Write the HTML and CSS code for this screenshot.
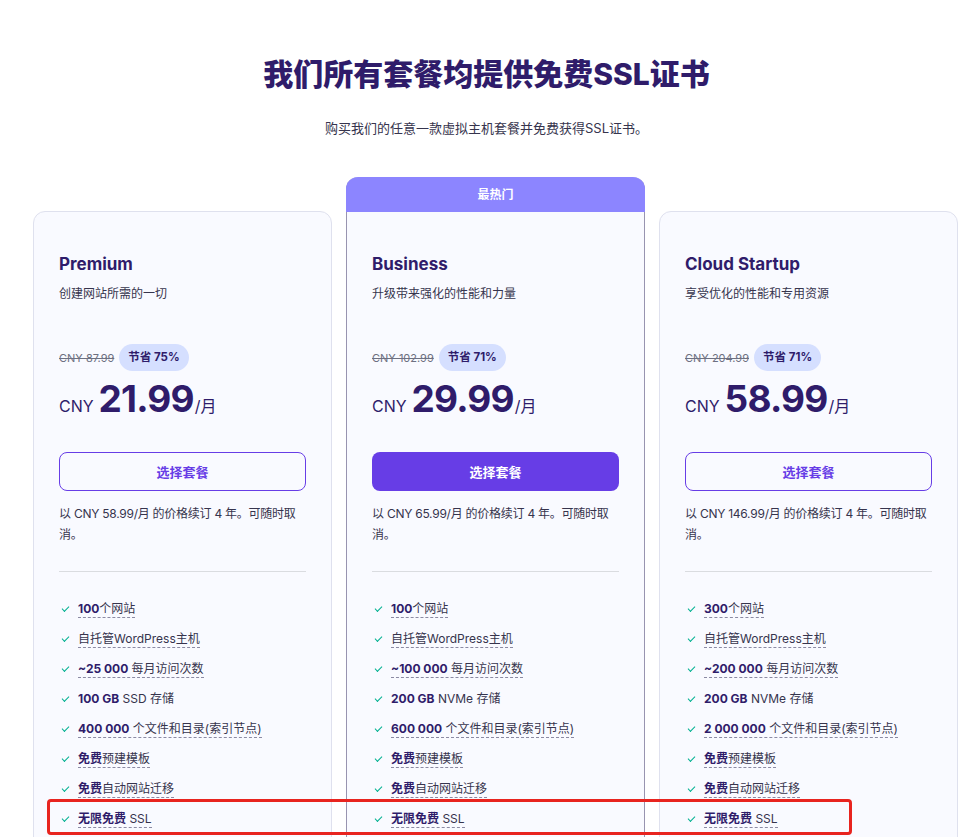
FILE: index.html
```html
<!DOCTYPE html>
<html lang="zh-CN">
<head>
    <meta charset="UTF-8">
    <meta name="viewport" content="width=device-width, initial-scale=1.0">
    <title>免费SSL证书</title>
    <link rel="stylesheet" href="styles.css">
</head>
<body>
<section class="ssl-section">
    <div class="section-header">
        <h1>我们所有套餐均提供免费SSL证书</h1>
        <p>购买我们的任意一款虚拟主机套餐并免费获得SSL证书。</p>
    </div>

    <div class="plans">
        <div class="plan">
            <h3 class="plan-name">Premium</h3>
            <p class="plan-desc">创建网站所需的一切</p>
            <div class="price-old">
                <span class="old">CNY 87.99</span>
                <span class="save">节省 75%</span>
            </div>
            <div class="price">
                <span class="currency">CNY</span>
                <span class="amount">21.99</span>
                <span class="period">/月</span>
            </div>
            <button class="btn btn-outline">选择套餐</button>
            <p class="renew">以 CNY 58.99/月 的价格续订 4 年。可随时取消。</p>
            <hr class="divider">
            <ul class="features">
                <li><span class="u"><b>100</b>个网站</span></li>
                <li><span class="u">自托管WordPress主机</span></li>
                <li><span class="u"><b>~25 000</b> 每月访问次数</span></li>
                <li><span><b>100 GB</b> SSD 存储</span></li>
                <li><span class="u"><b>400 000</b> 个文件和目录(索引节点)</span></li>
                <li><span class="u"><b>免费</b>预建模板</span></li>
                <li><span class="u"><b>免费</b>自动网站迁移</span></li>
                <li><span class="u"><b>无限免费</b> SSL</span></li>
            </ul>
        </div>

        <div class="plan plan-popular">
            <div class="plan-tag">最热门</div>
            <h3 class="plan-name">Business</h3>
            <p class="plan-desc">升级带来强化的性能和力量</p>
            <div class="price-old">
                <span class="old">CNY 102.99</span>
                <span class="save">节省 71%</span>
            </div>
            <div class="price">
                <span class="currency">CNY</span>
                <span class="amount">29.99</span>
                <span class="period">/月</span>
            </div>
            <button class="btn btn-primary">选择套餐</button>
            <p class="renew">以 CNY 65.99/月 的价格续订 4 年。可随时取消。</p>
            <hr class="divider">
            <ul class="features">
                <li><span class="u"><b>100</b>个网站</span></li>
                <li><span class="u">自托管WordPress主机</span></li>
                <li><span class="u"><b>~100 000</b> 每月访问次数</span></li>
                <li><span><b>200 GB</b> NVMe 存储</span></li>
                <li><span class="u"><b>600 000</b> 个文件和目录(索引节点)</span></li>
                <li><span class="u"><b>免费</b>预建模板</span></li>
                <li><span class="u"><b>免费</b>自动网站迁移</span></li>
                <li><span class="u"><b>无限免费</b> SSL</span></li>
            </ul>
        </div>

        <div class="plan">
            <h3 class="plan-name">Cloud Startup</h3>
            <p class="plan-desc">享受优化的性能和专用资源</p>
            <div class="price-old">
                <span class="old">CNY 204.99</span>
                <span class="save">节省 71%</span>
            </div>
            <div class="price">
                <span class="currency">CNY</span>
                <span class="amount">58.99</span>
                <span class="period">/月</span>
            </div>
            <button class="btn btn-outline">选择套餐</button>
            <p class="renew">以 CNY 146.99/月 的价格续订 4 年。可随时取消。</p>
            <hr class="divider">
            <ul class="features">
                <li><span class="u"><b>300</b>个网站</span></li>
                <li><span class="u">自托管WordPress主机</span></li>
                <li><span class="u"><b>~200 000</b> 每月访问次数</span></li>
                <li><span><b>200 GB</b> NVMe 存储</span></li>
                <li><span class="u"><b>2 000 000</b> 个文件和目录(索引节点)</span></li>
                <li><span class="u"><b>免费</b>预建模板</span></li>
                <li><span class="u"><b>免费</b>自动网站迁移</span></li>
                <li><span class="u"><b>无限免费</b> SSL</span></li>
            </ul>
        </div>

        <div class="highlight"></div>
    </div>
</section>
</body>
</html>
```

FILE: styles.css
```css
body {
    margin: 0;
    background: #fff;
    font-family: Inter, "Noto Sans CJK SC", sans-serif;
    color: #36344d;
}

.ssl-section {
    padding-top: 54px;
}

.section-header {
    text-align: center;
    padding-left: 14px;
}

.section-header h1 {
    margin: 0;
    font-size: 30px;
    line-height: 40px;
    font-weight: 800;
    color: #2f1c6a;
}

.section-header p {
    margin: 24px 0 0;
    font-size: 13px;
    line-height: 20px;
}

.plans {
    position: relative;
    display: grid;
    grid-template-columns: repeat(3, 299px);
    column-gap: 14px;
    align-items: start;
    padding-left: 33px;
    margin-top: 39px;
}

.plan {
    margin-top: 34px;
    padding: 40px 25px 0;
    background: #f9faff;
    border: 1px solid #dfe1ee;
    border-radius: 12px;
    height: 700px;
}

.plan-popular {
    margin-top: 0;
    padding-top: 0;
    border-color: #9894b0;
    border-top: 0;
    border-radius: 12px 12px 0 0;
}

.plan-tag {
    margin: 0 -26px 40px;
    height: 35px;
    line-height: 35px;
    background: #8c85ff;
    border-radius: 12px 12px 0 0;
    color: #fff;
    font-size: 12px;
    font-weight: 700;
    text-align: center;
}

.plan-name {
    margin: 0;
    font-size: 17px;
    line-height: 24px;
    font-weight: 700;
    color: #2f1c6a;
}

.plan-desc {
    margin: 9px 0 0;
    font-size: 12px;
    line-height: 18px;
}

.price-old {
    display: flex;
    align-items: center;
    gap: 5px;
    margin-top: 41px;
}

.old {
    font-size: 11px;
    color: #6d7081;
    text-decoration: line-through;
}

.save {
    height: 27px;
    line-height: 27px;
    padding: 0 9px;
    border-radius: 14px;
    background: #d5dfff;
    color: #2f1c6a;
    font-size: 11.5px;
    font-weight: 700;
}

.price {
    display: flex;
    align-items: baseline;
    gap: 5px;
    margin-top: 6px;
    line-height: 44px;
    color: #2f1c6a;
}

.currency {
    font-size: 16px;
}

.amount {
    font-size: 37px;
    font-weight: 700;
    letter-spacing: -0.8px;
}

.period {
    font-size: 16px;
    margin-left: -4px;
}

.btn {
    display: block;
    width: 100%;
    height: 39px;
    margin-top: 24px;
    border-radius: 8px;
    font-family: inherit;
    font-size: 13px;
    font-weight: 700;
    cursor: pointer;
}

.btn-outline {
    background: transparent;
    border: 1.5px solid #673de6;
    color: #673de6;
}

.btn-primary {
    background: #673de6;
    border: 0;
    color: #fff;
}

.renew {
    margin: 12px 0 0;
    font-size: 12px;
    line-height: 21px;
    letter-spacing: -0.25px;
}

.divider {
    margin: 26px 0 0;
    border: 0;
    border-top: 1px solid #dadce0;
}

.features {
    list-style: none;
    margin: 22px 0 0;
    padding: 0;
}

.features li {
    display: flex;
    align-items: center;
    height: 30px;
    font-size: 12px;
}

.features li::before {
    content: "";
    width: 6px;
    height: 3px;
    margin: -3px 9px 0 3px;
    border-left: 1.5px solid #00b090;
    border-bottom: 1.5px solid #00b090;
    transform: rotate(-45deg);
}

.features li span {
    line-height: 16px;
    border-bottom: 1px dashed transparent;
}

.features b {
    color: #2f1c6a;
    font-weight: 700;
}

.features li .u {
    border-bottom-color: #8b8aa3;
}

.highlight {
    position: absolute;
    left: 47px;
    top: 622px;
    width: 799px;
    height: 30px;
    border: 3px solid #e8241f;
    border-radius: 4px;
    pointer-events: none;
}
```
